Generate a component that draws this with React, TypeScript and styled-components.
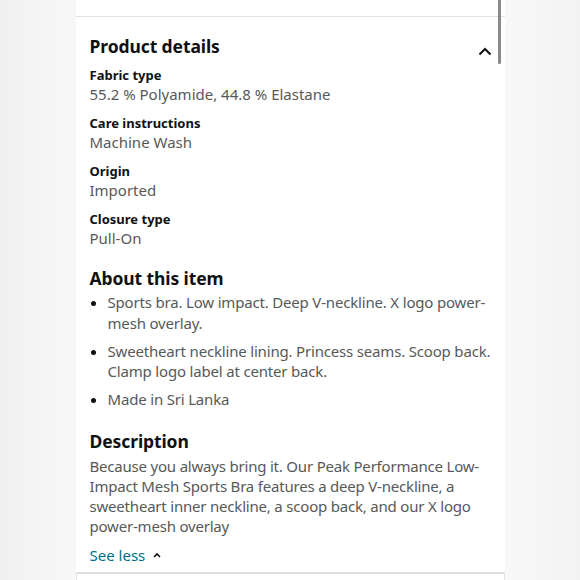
import React from "react";
import styled, { createGlobalStyle } from "styled-components";

const GlobalStyle = createGlobalStyle`
  html, body {
    margin: 0;
    padding: 0;
    background: #f4f4f4;
    font-family: "Noto Sans", "Open Sans", Arial, sans-serif;
  }
`;

const Page = styled.div`
  width: 580px;
  height: 580px;
  overflow: hidden;
  display: flex;
  justify-content: center;
  background: linear-gradient(90deg, #f0f0f0 0%, #f7f7f7 12%, #f8f8f8 88%, #f2f2f2 100%);
`;

const Panel = styled.div`
  position: relative;
  width: 429px;
  background: #fff;
  display: flex;
  flex-direction: column;
`;

const TopStrip = styled.div`
  height: 16px;
  border-bottom: 1px solid #e2e2e2;
  flex-shrink: 0;
`;

const Scrollbar = styled.div`
  position: absolute;
  top: 0;
  right: 4px;
  width: 3px;
  height: 64px;
  background: #8a8a8a;
  border-radius: 0 0 2px 2px;
`;

const Body = styled.div`
  padding: 17px 13px 0 14px;
  display: flex;
  flex-direction: column;
`;

const HeaderRow = styled.div`
  display: flex;
  align-items: center;
  justify-content: space-between;
`;

const Heading = styled.h2<{ $top?: number }>`
  margin: ${(p) => p.$top ?? 0}px 0 0;
  font-size: 17.5px;
  line-height: 24px;
  font-weight: 700;
  letter-spacing: -0.1px;
  color: #0f1111;
`;

const Chevron = styled.svg`
  width: 14px;
  height: 9px;
  margin-top: 10px;
`;

const DetailList = styled.dl`
  margin: 9px 0 0;
  display: flex;
  flex-direction: column;
  gap: 11px;
`;

const Detail = styled.div`
  display: flex;
  flex-direction: column;
`;

const Label = styled.dt`
  font-size: 13px;
  line-height: 17px;
  font-weight: 700;
  color: #0f1111;
`;

const Value = styled.dd`
  margin: 0;
  font-size: 15px;
  line-height: 20px;
  color: #565959;
`;

const Bullets = styled.ul`
  margin: 2px 0 0;
  padding: 0 0 0 18px;
  display: flex;
  flex-direction: column;
  gap: 7.5px;
`;

const Bullet = styled.li`
  font-size: 15px;
  line-height: 20.5px;
  letter-spacing: -0.18px;
  color: #565959;
  &::marker {
    color: #0f1111;
  }
`;

const Paragraph = styled.p`
  margin: 3px 0 0;
  font-size: 15px;
  line-height: 20.3px;
  letter-spacing: -0.2px;
  color: #565959;
`;

const SeeLess = styled.a`
  margin-top: 8px;
  display: inline-flex;
  align-items: center;
  gap: 8px;
  font-size: 15px;
  line-height: 20px;
  color: #007185;
  text-decoration: none;
`;

const Footer = styled.div`
  margin-top: auto;
  height: 6px;
  border-top: 2px solid #dcdcdc;
  border-left: 1px solid #e6e6e6;
  border-right: 1px solid #e6e6e6;
  background: #fff;
`;

const details = [
  { label: "Fabric type", value: "55.2 % Polyamide, 44.8 % Elastane" },
  { label: "Care instructions", value: "Machine Wash" },
  { label: "Origin", value: "Imported" },
  { label: "Closure type", value: "Pull-On" },
];

const bullets = [
  "Sports bra. Low impact. Deep V-neckline. X logo power-mesh overlay.",
  "Sweetheart neckline lining. Princess seams. Scoop back. Clamp logo label at center back.",
  "Made in Sri Lanka",
];

export default function App() {
  return (
    <>
      <GlobalStyle />
      <Page>
        <Panel>
          <TopStrip />
          <Scrollbar />
          <Body>
            <HeaderRow>
              <Heading>Product details</Heading>
              <Chevron viewBox="0 0 14 9">
                <path d="M1.5 7.5 L7 2 L12.5 7.5" fill="none" stroke="#0f1111" strokeWidth="2" />
              </Chevron>
            </HeaderRow>
            <DetailList>
              {details.map((d) => (
                <Detail key={d.label}>
                  <Label>{d.label}</Label>
                  <Value>{d.value}</Value>
                </Detail>
              ))}
            </DetailList>
            <Heading $top={18}>About this item</Heading>
            <Bullets>
              {bullets.map((b) => (
                <Bullet key={b}>{b}</Bullet>
              ))}
            </Bullets>
            <Heading $top={19}>Description</Heading>
            <Paragraph>
              Because you always bring it. Our Peak Performance Low-Impact Mesh Sports Bra
              features a deep V-neckline, a sweetheart inner neckline, a scoop back, and our X
              logo power-mesh overlay
            </Paragraph>
            <SeeLess href="#">
              See less
              <svg width="8" height="6" viewBox="0 0 8 6">
                <path d="M1 5 L4 2 L7 5" fill="none" stroke="#0f1111" strokeWidth="1.6" />
              </svg>
            </SeeLess>
          </Body>
          <Footer />
        </Panel>
      </Page>
    </>
  );
}
